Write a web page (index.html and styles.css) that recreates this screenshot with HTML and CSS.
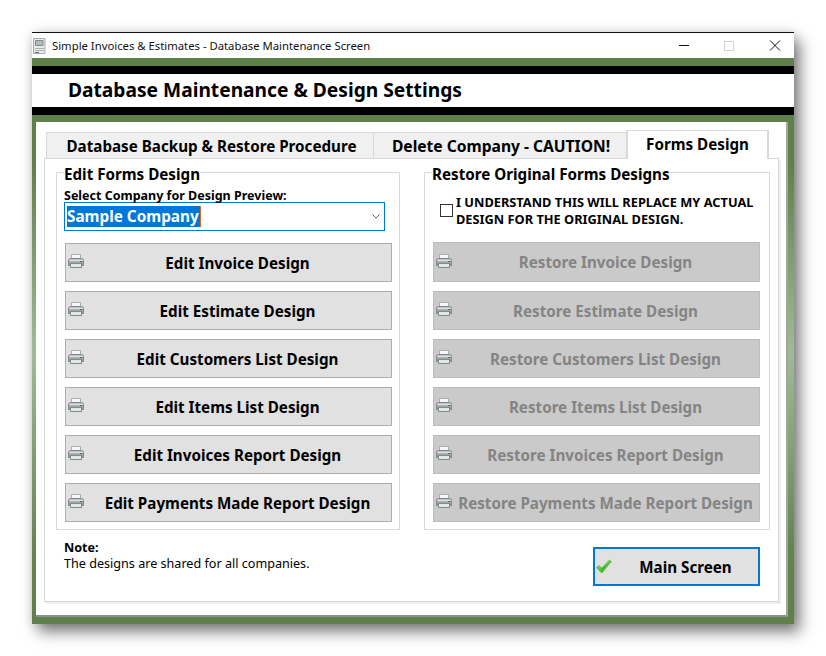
FILE: index.html
```html
<!DOCTYPE html>
<html lang="en">
<head>
<meta charset="utf-8">
<title>Simple Invoices &amp; Estimates - Database Maintenance Screen</title>
<link rel="stylesheet" href="styles.css">
</head>
<body>
<svg class="defs" width="0" height="0" aria-hidden="true">
  <defs>
    <linearGradient id="pb" x1="0" y1="0" x2="0" y2="1"><stop offset="0" stop-color="#c4cacc"/><stop offset="1" stop-color="#858e92"/></linearGradient>
    <linearGradient id="ck" x1="0" y1="0" x2="0" y2="1"><stop offset="0" stop-color="#a8ee7c"/><stop offset="1" stop-color="#3ab526"/></linearGradient>
    <symbol id="printer" viewBox="0 0 16 14">
      <path d="M3.500.500h9v5h-9z" fill="#f6f7f7" stroke="#a9aeb0"/>
      <path d="M.500 6.500c0-1.200.8-2 2-2h11c1.200 0 2 .8 2 2v5h-15z" fill="url(#pb)" stroke="#80898d"/>
      <path d="M1.500 6.500h13" stroke="#dfe3e4"/>
      <path d="M2.500 9.500h11v4h-11z" fill="#e4e6e7" stroke="#80898d"/>
      <path d="M12 7.500h2" stroke="#555d60"/>
    </symbol>
  </defs>
</svg>
<main class="window">
  <header class="titlebar">
    <svg class="appicon" viewBox="0 0 13 16" width="13" height="16" aria-hidden="true">
      <path d="M.500.500h11.500v15H.500z" fill="#e8ecec" stroke="#a3abab"/>
      <path d="M2.500 2.500h7.500v5H2.500z" fill="#b3bcbc" stroke="#7f8989"/>
      <path d="M2 10.500h9M2 12.500h9" stroke="#a7afaf"/>
      <path d="M2 14.500h4" stroke="#5a6a9a"/>
    </svg>
    <span class="titletext">Simple Invoices &amp; Estimates - Database Maintenance Screen</span>
    <span class="winbtns">
      <svg viewBox="0 0 46 25" width="46" height="25" aria-hidden="true"><path d="M23 12.500h10" stroke="#111"/></svg>
      <svg viewBox="0 0 46 25" width="46" height="25" aria-hidden="true"><path d="M22.500 8.500h9v9h-9z" fill="none" stroke="#cfcfcf"/></svg>
      <svg viewBox="0 0 46 25" width="46" height="25" aria-hidden="true"><path d="M22 7.500l10 10M32 7.500l-10 10" stroke="#111" fill="none"/></svg>
    </span>
  </header>
  <div class="banner"><h1>Database Maintenance &amp; Design Settings</h1></div>
  <div class="panel">
    <nav class="tabs">
      <span class="tab t1">Database Backup &amp; Restore Procedure</span>
      <span class="tab t2">Delete Company - CAUTION!</span>
      <span class="tab active">Forms Design</span>
    </nav>
    <section class="page">
      <div class="groups">
        <fieldset class="group">
          <legend>Edit Forms Design</legend>
          <label class="sel-label">Select Company for Design Preview:</label>
          <div class="combo">
            <span class="sel">Sample Company</span>
            <svg viewBox="0 0 8 5" width="8" height="5" aria-hidden="true"><path d="M.500.500L4 4 7.500.500" fill="none" stroke="#666"/></svg>
          </div>
          <div class="btns">
            <button class="btn"><svg class="ic"><use href="#printer"/></svg>Edit Invoice Design</button>
            <button class="btn"><svg class="ic"><use href="#printer"/></svg>Edit Estimate Design</button>
            <button class="btn"><svg class="ic"><use href="#printer"/></svg>Edit Customers List Design</button>
            <button class="btn"><svg class="ic"><use href="#printer"/></svg>Edit Items List Design</button>
            <button class="btn"><svg class="ic"><use href="#printer"/></svg>Edit Invoices Report Design</button>
            <button class="btn"><svg class="ic"><use href="#printer"/></svg>Edit Payments Made Report Design</button>
          </div>
        </fieldset>
        <fieldset class="group right">
          <legend>Restore Original Forms Designs</legend>
          <div class="ack">
            <span class="box"></span>
            <span class="acktext">I UNDERSTAND THIS WILL REPLACE MY ACTUAL DESIGN FOR THE ORIGINAL DESIGN.</span>
          </div>
          <div class="btns">
            <button class="btn off"><svg class="ic"><use href="#printer"/></svg>Restore Invoice Design</button>
            <button class="btn off"><svg class="ic"><use href="#printer"/></svg>Restore Estimate Design</button>
            <button class="btn off"><svg class="ic"><use href="#printer"/></svg>Restore Customers List Design</button>
            <button class="btn off"><svg class="ic"><use href="#printer"/></svg>Restore Items List Design</button>
            <button class="btn off"><svg class="ic"><use href="#printer"/></svg>Restore Invoices Report Design</button>
            <button class="btn off"><svg class="ic"><use href="#printer"/></svg>Restore Payments Made Report Design</button>
          </div>
        </fieldset>
      </div>
      <div class="foot">
        <div class="note"><strong>Note:</strong><br>The designs are shared for all companies.</div>
        <button class="btn main">
          <svg class="ic" viewBox="0 0 16 14" aria-hidden="true"><path d="M.500 8.500L3 6.500l3 2.500L13 1l2.500 1.500-9 11h-1.500z" fill="url(#ck)" stroke="#6ab455" stroke-width=".7"/><path d="M6 10.500L14.500 2" stroke="#2c7d1f" fill="none"/></svg>Main Screen</button>
      </div>
    </section>
  </div>
</main>
</body>
</html>
```

FILE: styles.css
```css
* { box-sizing: border-box; }
html, body { margin: 0; background: #fff; }
body { padding: 32px; width: 826px; height: 656px; overflow: hidden; font-family: "Noto Sans", "Open Sans", sans-serif; color: #000; }
.defs { position: absolute; }
.window { width: 762px; height: 592px; display: flex; flex-direction: column; background: linear-gradient(180deg, #5f804a 0, #5f804a 22%, #a0bb96 54%, #618450 88%, #5f804a 100%); border-top: 1px solid #111; box-shadow: 6px 8px 14px rgba(0,0,0,.5), 0 0 10px rgba(0,0,0,.12); }
.titlebar { height: 25px; flex: none; background: #fff; display: flex; align-items: center; padding-left: 1px; }
.appicon { flex: none; margin-right: 6px; }
.titletext { font-size: 11.300px; flex: 1; color: #111; }
.winbtns { display: flex; height: 25px; }
.winbtns svg { display: block; }
.banner { flex: none; margin-top: 8px; height: 49px; background: #fff; border-top: 8px solid #000; border-bottom: 8px solid #000; padding: 0 0 2px 36px; display: flex; align-items: center; }
h1 { margin: 0; font-size: 19.200px; font-weight: 700; }
.panel { flex: 1; margin: 7px 6px 7px 4px; background: #fff; border-right: 2px solid #a3a3a3; border-bottom: 2px solid #8f8f8f; padding: 8px 7px 13px 8px; display: flex; flex-direction: column; }
.tabs { display: flex; height: 28px; padding-left: 2px; flex: none; align-items: flex-end; }
.tab { height: 26px; font-size: 15.200px; font-weight: 700; background: #f0f0f0; border: 1px solid #d9d9d9; border-bottom: 0; display: flex; align-items: center; justify-content: center; }
.t1 { width: 327px; border-right: 0; padding-left: 3px; }
.t2 { width: 253px; border-right: 0; font-size: 15.600px; padding-left: 2px; }
.active { width: 143px; background: #fff; position: relative; margin-bottom: -1px; height: 29px; padding-bottom: 3px; border-width: 1px 2px 0 2px; }
.page { flex: 1; border: 1px solid #d8d8d8; box-shadow: 2px 2px 0 #eee; padding: 1px 8px 0 11px; display: flex; flex-direction: column; }
.groups { display: flex; justify-content: space-between; height: 370px; flex: none; }
.group { margin: 0; width: 344px; height: 370px; border: 1px solid #d9d9d9; padding: 0 7px; min-width: 0; }
.group.right { width: 346px; padding: 0 8px; }
.group.right legend { margin-left: -1px; }
legend { font-size: 15.200px; font-weight: 700; padding: 4px 0 0; line-height: 20px; }
.sel-label { display: block; font-size: 12.500px; font-weight: 700; line-height: 16px; margin-top: 4px; }
.combo { width: 321px; height: 29px; margin-top: -2px; border: 1px solid #0078d7; display: flex; align-items: center; justify-content: space-between; padding: 0 4px 0 2px; }
.sel { background: #0078d7; color: #fff; font-size: 15.300px; font-weight: 700; line-height: 21px; width: 134px; white-space: nowrap; border-right: 1px solid #d2701e; }
.btns { display: flex; flex-direction: column; gap: 9px; margin: 12px 0 0 1px; }
.btn { position: relative; display: flex; align-items: center; justify-content: center; width: 327px; height: 39px; margin: 0; padding: 0 0 0 18px; background: #e1e1e1; border: 1px solid #adadad; font-family: inherit; font-size: 15.200px; font-weight: 700; color: #000; white-space: nowrap; }
.ic { position: absolute; left: 2px; top: 10px; width: 16px; height: 14px; }
.off { background: #cacaca; border-color: #bdbdbd; color: #848484; }
.ack { display: flex; align-items: center; margin-top: 10px; height: 34px; padding-left: 7px; }
.box { flex: none; width: 13px; height: 13px; border: 1px solid #333; background: #fff; margin: -1px 3px 0 0; }
.acktext { font-size: 12.800px; font-weight: 700; line-height: 17px; }
.right .btns { margin: 14px 0 0; }
.right .btn:first-child { height: 40px; }
.right .btn:first-child .ic { top: 11px; }
.foot { display: flex; justify-content: space-between; flex: 1; padding: 9px 0 0 8px; }
.note { font-size: 12.600px; line-height: 16px; margin-top: 1px; }
.btn.main { width: 167px; height: 39px; border: 2px solid #0078d7; margin: 8px 10px 0 0; }
.btn.main .ic { left: 1px; top: 10px; }
```
